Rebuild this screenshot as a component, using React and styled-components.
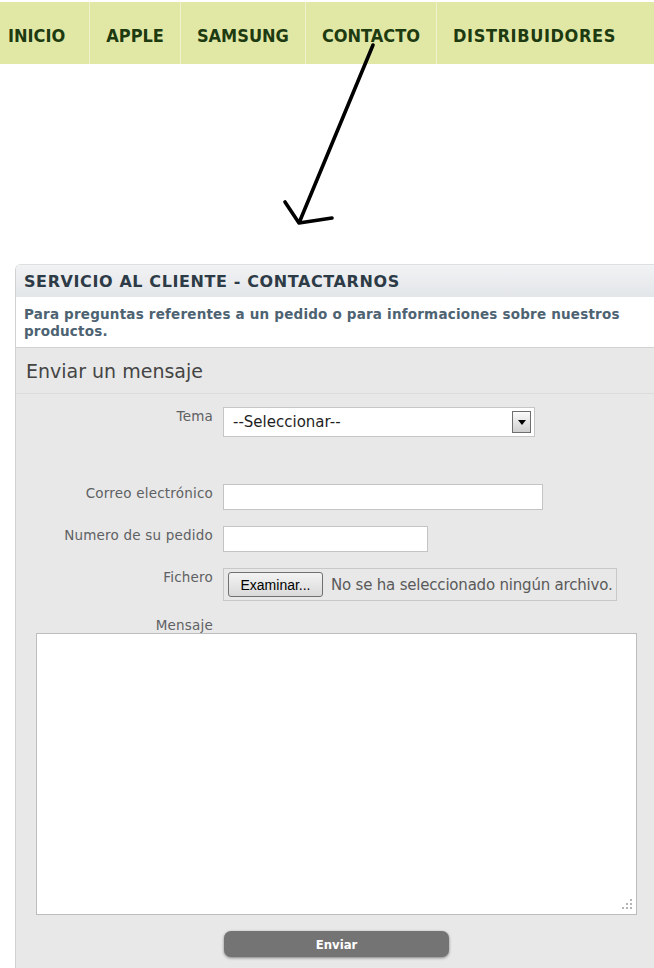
import React from "react";
import styled, { createGlobalStyle } from "styled-components";

const GlobalStyle = createGlobalStyle`
  body {
    margin: 0;
    background: #fff;
    font-family: "DejaVu Sans", Verdana, sans-serif;
  }
`;

const Page = styled.div`
  position: relative;
  width: 654px;
  height: 968px;
  overflow: hidden;
  background: #fff;
`;

const Nav = styled.nav`
  display: flex;
  height: 62px;
  margin-top: 2px;
  background: #e1e8a6;
`;

const NavItem = styled.a`
  display: flex;
  align-items: center;
  padding: 4px ${(p) => (p.$first ? "24px" : "16px")} 0 ${(p) => (p.$first ? "8px" : "16px")};
  border-right: 1px solid #eff3cd;
  font-family: "DejaVu Sans Condensed", "DejaVu Sans", sans-serif;
  font-size: 18px;
  font-weight: bold;
  letter-spacing: ${(p) => (p.$wide ? "0.6px" : "0")};
  color: #1d3a10;
  text-decoration: none;
  &:last-child {
    border-right: none;
  }
`;

const Arrow = styled.svg`
  position: absolute;
  left: 270px;
  top: 40px;
`;

const Panel = styled.section`
  margin: 200px 0 0 15px;
  border-left: 1px solid #d2d2d2;
  border-top-left-radius: 6px;
  overflow: hidden;
`;

const PanelHeader = styled.h2`
  margin: 0;
  height: 32px;
  display: flex;
  align-items: center;
  padding-left: 8px;
  border-top: 1px solid #dddfe1;
  background: linear-gradient(#f1f2f4, #e3e6e9);
  font-size: 16px;
  font-weight: bold;
  letter-spacing: 0.6px;
  color: #2d3b47;
  white-space: nowrap;
`;

const Intro = styled.p`
  margin: 0;
  padding: 9px 8px 7px;
  background: #fff;
  font-size: 13.5px;
  font-weight: bold;
  letter-spacing: 0.2px;
  line-height: 17px;
  color: #4d6372;
`;

const FormArea = styled.div`
  background: #e8e8e8;
  border-top: 1px solid #d2d2d2;
  padding-bottom: 40px;
`;

const SectionTitle = styled.h3`
  margin: 0;
  height: 45px;
  display: flex;
  align-items: center;
  padding-left: 10px;
  border-bottom: 1px solid #dcdcdc;
  font-size: 19px;
  font-weight: normal;
  color: #444;
`;

const Row = styled.div`
  display: flex;
  align-items: flex-start;
  gap: 10px;
  margin-top: ${(p) => p.$top}px;
`;

const Label = styled.label`
  width: 197px;
  flex-shrink: 0;
  text-align: right;
  font-size: 13.5px;
  letter-spacing: 0.2px;
  line-height: 18px;
  color: #5e6163;
`;

const SelectWrap = styled.div`
  position: relative;
  width: 312px;
  height: 30px;
`;

const Select = styled.select`
  appearance: none;
  box-sizing: border-box;
  width: 100%;
  height: 100%;
  padding: 0 0 0 9px;
  border: 1px solid #c6c6c6;
  border-radius: 0;
  background: #fff;
  font-family: "DejaVu Sans", Verdana, sans-serif;
  font-size: 15px;
  color: #1e1e1e;
  outline: none;
`;

const SelectButton = styled.span`
  position: absolute;
  right: 4px;
  top: 4px;
  width: 17px;
  height: 20px;
  border: 1px solid #6e6e6e;
  background: linear-gradient(#fafafa, #cfcfcf);
  display: flex;
  align-items: center;
  justify-content: center;
  pointer-events: none;
  &::after {
    content: "";
    border-left: 4px solid transparent;
    border-right: 4px solid transparent;
    border-top: 5px solid #000;
  }
`;

const TextInput = styled.input`
  box-sizing: border-box;
  width: ${(p) => p.$w}px;
  height: 26px;
  border: 1px solid #c4c4c4;
  background: #fff;
  outline: none;
`;

const FileBox = styled.div`
  box-sizing: border-box;
  width: 394px;
  height: 33px;
  border: 1px solid #c8c8c8;
  display: flex;
  align-items: center;
  gap: 8px;
  padding-left: 4px;
`;

const FileButton = styled.button`
  box-sizing: border-box;
  width: 95px;
  height: 25px;
  border: 1px solid #707070;
  border-radius: 3px;
  background: linear-gradient(#f3f3f3, #dadada);
  font-family: "Liberation Sans", Arial, sans-serif;
  font-size: 14px;
  color: #000;
  padding: 0;
`;

const FileText = styled.span`
  font-size: 15px;
  letter-spacing: -0.2px;
  color: #5a5a5a;
  white-space: nowrap;
`;

const MessageBox = styled.div`
  position: relative;
  margin: -1px 0 0 20px;
  width: 601px;
  height: 282px;
`;

const TextArea = styled.textarea`
  box-sizing: border-box;
  width: 100%;
  height: 100%;
  border: 1px solid #bdbdbd;
  background: #fff;
  resize: none;
  outline: none;
`;

const Grip = styled.svg`
  position: absolute;
  right: 4px;
  bottom: 4px;
`;

const Actions = styled.div`
  display: flex;
  justify-content: center;
  width: 601px;
  margin: 16px 0 0 20px;
`;

const SubmitButton = styled.button`
  width: 225px;
  height: 26px;
  border: none;
  border-radius: 7px;
  background: #747474;
  box-shadow: 0 1px 3px rgba(0, 0, 0, 0.45);
  font-family: "DejaVu Sans Condensed", "DejaVu Sans", sans-serif;
  font-size: 13px;
  font-weight: bold;
  color: #fff;
`;

const App = () => {
  return (
    <Page>
      <GlobalStyle />
      <Nav>
        <NavItem $first>INICIO</NavItem>
        <NavItem>APPLE</NavItem>
        <NavItem>SAMSUNG</NavItem>
        <NavItem>CONTACTO</NavItem>
        <NavItem $wide>DISTRIBUIDORES</NavItem>
      </Nav>
      <Arrow width="110" height="190" viewBox="0 0 110 190">
        <path
          d="M103 5 L29 183 M15 162 L29 183 L62 178"
          fill="none"
          stroke="#000"
          strokeWidth="3.6"
          strokeLinecap="round"
          strokeLinejoin="round"
        />
      </Arrow>
      <Panel>
        <PanelHeader>SERVICIO AL CLIENTE - CONTACTARNOS</PanelHeader>
        <Intro>
          Para preguntas referentes a un pedido o para informaciones sobre nuestros productos.
        </Intro>
        <FormArea>
          <SectionTitle>Enviar un mensaje</SectionTitle>
          <Row $top={13}>
            <Label>Tema</Label>
            <SelectWrap>
              <Select defaultValue="">
                <option value="">--Seleccionar--</option>
              </Select>
              <SelectButton />
            </SelectWrap>
          </Row>
          <Row $top={47}>
            <Label>Correo electrónico</Label>
            <TextInput $w={320} />
          </Row>
          <Row $top={16}>
            <Label>Numero de su pedido</Label>
            <TextInput $w={205} />
          </Row>
          <Row $top={16}>
            <Label>Fichero</Label>
            <FileBox>
              <FileButton>Examinar...</FileButton>
              <FileText>No se ha seleccionado ningún archivo.</FileText>
            </FileBox>
          </Row>
          <Row $top={15}>
            <Label>Mensaje</Label>
          </Row>
          <MessageBox>
            <TextArea />
            <Grip width="12" height="12" viewBox="0 0 12 12">
              <g fill="#b5b5b5">
                <rect x="9" y="0" width="2" height="2" />
                <rect x="5" y="4" width="2" height="2" />
                <rect x="9" y="4" width="2" height="2" />
                <rect x="1" y="8" width="2" height="2" />
                <rect x="5" y="8" width="2" height="2" />
                <rect x="9" y="8" width="2" height="2" />
              </g>
            </Grip>
          </MessageBox>
          <Actions>
            <SubmitButton>Enviar</SubmitButton>
          </Actions>
        </FormArea>
      </Panel>
    </Page>
  );
};

export default App;
